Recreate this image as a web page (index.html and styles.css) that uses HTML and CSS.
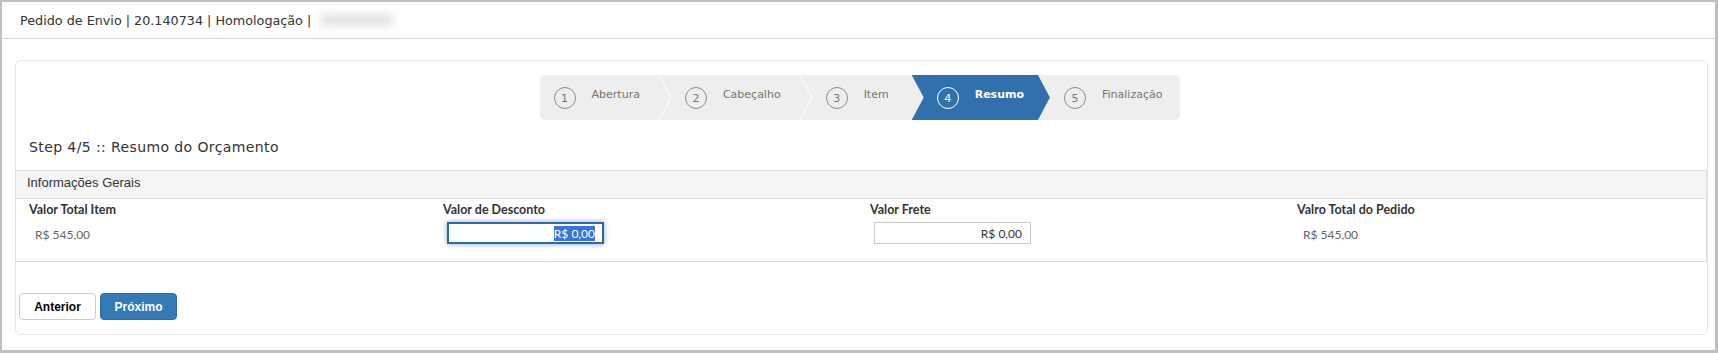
FILE: index.html
```html
<!DOCTYPE html>
<html lang="pt-BR">
<head>
    <meta charset="UTF-8">
    <meta name="viewport" content="width=device-width, initial-scale=1.0">
    <title>Pedido de Envio</title>
    <link rel="stylesheet" href="styles.css">
</head>
<body>
    <div class="page">
        <div class="topbar">
            <span>Pedido de Envio | 20.140734 | Homologação |</span>
            <span class="blurred"></span>
        </div>

        <div class="card">
            <div class="wizard-wrap">
                <div class="wizard">
                    <div class="step"><span class="num">1</span><span class="label">Abertura</span></div>
                    <svg class="sep" width="12" height="45" viewBox="0 0 12 45"><polyline points="0,0 12,22.5 0,45" /></svg>
                    <div class="step"><span class="num">2</span><span class="label">Cabeçalho</span></div>
                    <svg class="sep" width="12" height="45" viewBox="0 0 12 45"><polyline points="0,0 12,22.5 0,45" /></svg>
                    <div class="step item"><span class="num">3</span><span class="label">Item</span></div>
                    <svg class="sep" width="12" height="45" viewBox="0 0 12 45"><polyline points="0,0 12,22.5 0,45" /></svg>
                    <div class="step active"><span class="num">4</span><span class="label">Resumo</span></div>
                    <svg class="sep" width="12" height="45" viewBox="0 0 12 45"><polyline points="0,0 12,22.5 0,45" /></svg>
                    <div class="step last"><span class="num">5</span><span class="label">Finalização</span></div>
                </div>
            </div>

            <h3 class="step-title">Step 4/5 :: Resumo do Orçamento</h3>

            <div class="panel">
                <div class="panel-heading">Informações Gerais</div>
                <div class="panel-body">
                    <div class="field first">
                        <label>Valor Total Item</label>
                        <p class="value">R$ 545,00</p>
                    </div>
                    <div class="field">
                        <label for="desconto">Valor de Desconto</label>
                        <input type="text" id="desconto" class="input focused" value="R$ 0,00">
                    </div>
                    <div class="field">
                        <label for="frete">Valor Frete</label>
                        <input type="text" id="frete" class="input" value="R$ 0,00">
                    </div>
                    <div class="field">
                        <label>Valro Total do Pedido</label>
                        <p class="value">R$ 545,00</p>
                    </div>
                </div>
            </div>

            <div class="actions">
                <button class="btn">Anterior</button>
                <button class="btn btn-primary">Próximo</button>
            </div>
        </div>
    </div>

    <script>
        let desconto = document.getElementById("desconto");
        desconto.focus();
        desconto.select();
    </script>
</body>
</html>
```

FILE: styles.css
```css
body {
    margin: 0;
    background: #fff;
    color: #333;
}
.page {
    box-sizing: border-box;
    height: 353px;
    border: 2px solid #c0c0c0;
    border-right-width: 3px;
    border-bottom-width: 3px;
    background: #fff;
}
.topbar {
    height: 36px;
    padding-left: 18px;
    border-bottom: 1px solid #d6d6d6;
    display: flex;
    align-items: center;
    font-family: "DejaVu Sans", Verdana, sans-serif;
    font-size: 12.75px;
    color: #333;
}
.blurred {
    display: inline-block;
    width: 72px;
    height: 12px;
    margin-left: 10px;
    background: #e0e0e0;
    filter: blur(5px);
}
.card {
    margin: 21px 7px 0 13px;
    border: 1px solid #e6e6e6;
    border-radius: 6px;
    padding: 14px 0 14px;
}
.wizard-wrap {
    display: flex;
    justify-content: center;
    padding-right: 3px;
}
.wizard {
    display: flex;
    height: 45px;
    background: #eee;
    border-radius: 5px;
    overflow: hidden;
    font-family: "DejaVu Sans", Verdana, sans-serif;
}
.step {
    display: flex;
    align-items: center;
    gap: 16px;
    padding: 0 19px 0 14px;
    position: relative;
}
.step .num {
    box-sizing: border-box;
    width: 22px;
    height: 22px;
    border: 1px solid #8c8c8c;
    border-radius: 50%;
    display: flex;
    align-items: center;
    justify-content: center;
    font-size: 11px;
    color: #777;
    padding-top: 1px;
}
.step .label {
    font-size: 11px;
    color: #7a736c;
    padding-bottom: 6px;
}
.step.item {
    padding-right: 23px;
}
.step.active {
    margin: 0 -12px;
    padding: 0 26px 0 25px;
    background: #3071ad;
    z-index: 1;
    clip-path: polygon(0 0, calc(100% - 12px) 0, 100% 50%, calc(100% - 12px) 100%, 0 100%, 12px 50%);
}
.step.active .num {
    border-color: #fff;
    color: #fff;
}
.step.active .label {
    color: #fff;
    font-weight: bold;
}
.step.last {
    padding-right: 18px;
}
.sep {
    flex: none;
}
.sep polyline {
    fill: none;
    stroke: #fff;
    stroke-width: 1;
}
.step-title {
    margin: 0;
    padding: 19px 13px 0;
    line-height: 16px;
    font-family: "DejaVu Sans", Verdana, sans-serif;
    font-size: 14px;
    letter-spacing: 0.4px;
    font-weight: normal;
    color: #333;
    margin-bottom: 15px;
}
.panel {
    margin: 0 0 0 -1px;
    border: 1px solid #ddd;
}
.panel-heading {
    height: 27px;
    line-height: 23px;
    padding-left: 11px;
    background: #f5f5f5;
    border-bottom: 1px solid #ddd;
    font-family: "Liberation Sans", Arial, sans-serif;
    font-size: 13px;
    color: #333;
}
.panel-body {
    display: grid;
    grid-template-columns: 427px 427px 427px 1fr;
    padding: 3px 0 17px;
    font-family: Lato, "Noto Sans", sans-serif;
}
.field label {
    display: block;
    line-height: 15px;
    font-size: 12.5px;
    font-weight: bold;
    color: #333;
}
.field.first {
    padding-left: 13px;
}
.value {
    margin: 10px 0 0 6px;
    line-height: 15px;
    font-size: 12px;
    color: #666;
}
.input {
    box-sizing: border-box;
    display: block;
    width: 157px;
    height: 22px;
    margin: 5px 0 0 4px;
    padding: 0 8px;
    border: 1px solid #ccc;
    text-align: right;
    font-family: Lato, "Noto Sans", sans-serif;
    font-size: 12px;
    color: #333;
    outline: none;
}
.input.focused {
    border: 2px solid #2d68a6;
    box-shadow: 0 0 5px rgba(45, 104, 166, 0.6);
    padding-right: 7px;
}
.input::selection {
    background: #3875d7;
    color: #fff;
}
.actions {
    display: flex;
    gap: 4px;
    margin: 31px 0 0 3px;
}
.btn {
    box-sizing: border-box;
    width: 77px;
    height: 27px;
    border: 1px solid #ccc;
    border-radius: 4px;
    background: #fff;
    color: #000;
    font-family: "Liberation Sans", Arial, sans-serif;
    font-size: 12px;
    font-weight: bold;
    cursor: pointer;
}
.btn-primary {
    background: #337ab7;
    border-color: #2e6da4;
    color: #fff;
}
```
